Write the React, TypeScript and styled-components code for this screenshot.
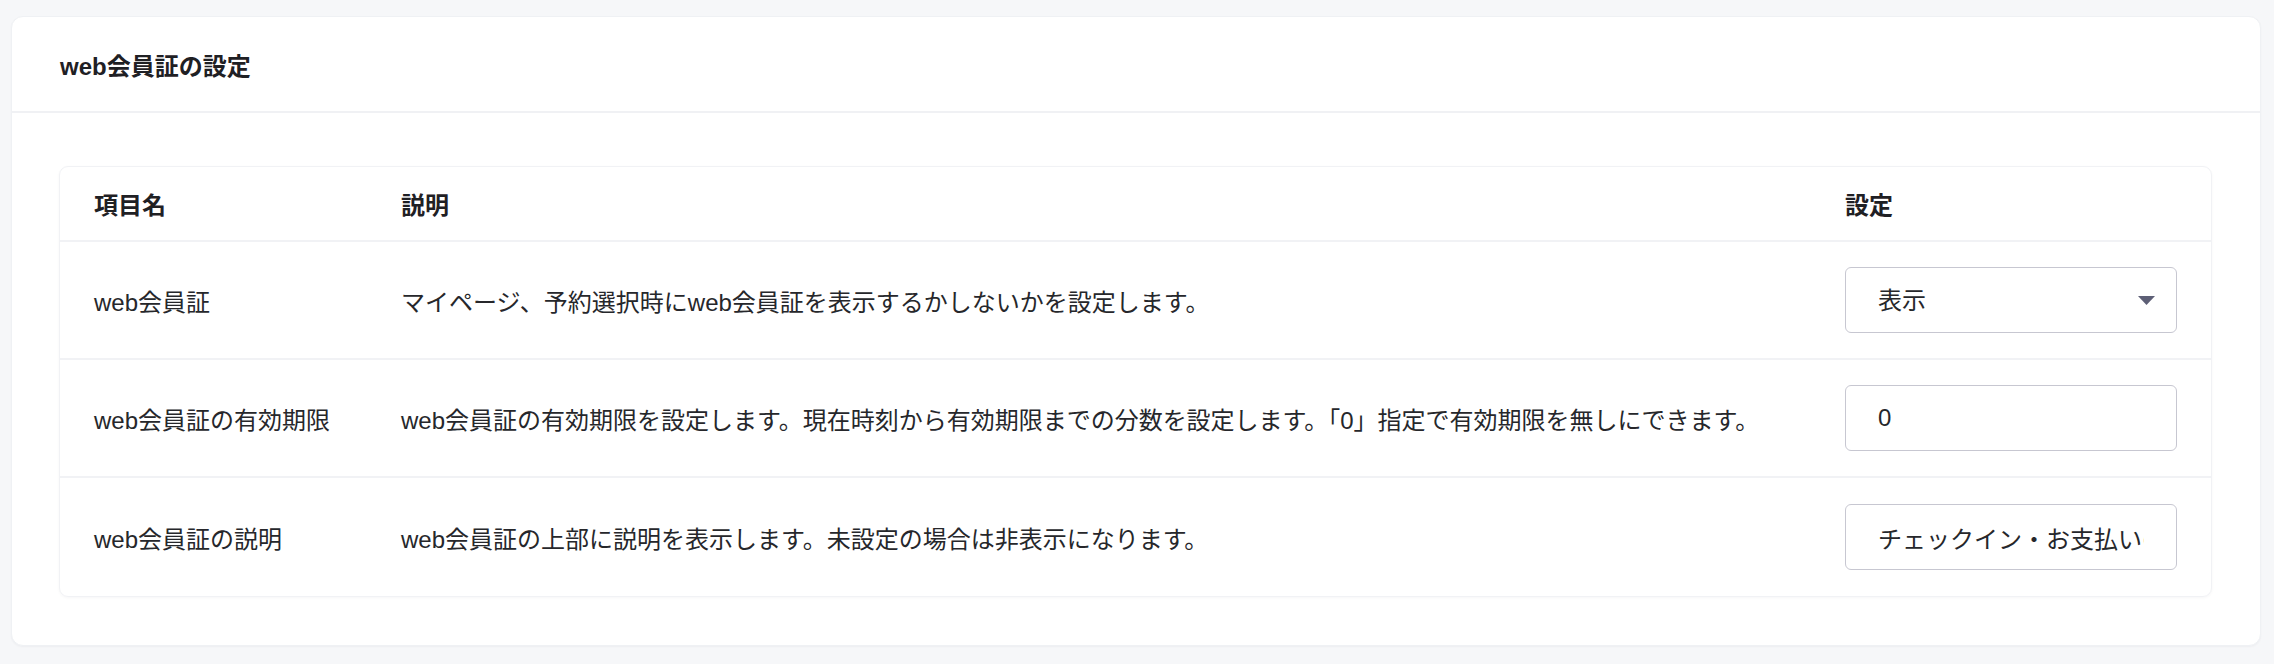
import React from "react";
import styled, { createGlobalStyle } from "styled-components";

const GlobalStyle = createGlobalStyle`
  html, body {
    margin: 0;
    padding: 0;
    background: #f6f7f9;
  }
  body {
    font-family: "Liberation Sans", "Noto Sans CJK JP", sans-serif;
    color: #222326;
  }
  * { box-sizing: border-box; }
`;

const Page = styled.div`
  padding: 16px 13px 20px 11px;
`;

const Card = styled.section`
  background: #ffffff;
  border-radius: 12px;
  box-shadow: 0 1px 2px rgba(20, 30, 50, 0.04);
  border: 1px solid #eff1f4;
`;

const CardHeader = styled.header`
  height: 96px;
  display: flex;
  align-items: center;
  padding-left: 48px;
  border-bottom: 2px solid #f0f1f4;
`;

const Title = styled.h2`
  margin: 0;
  font-size: 24px;
  font-weight: 700;
  color: #1f2024;
  letter-spacing: 0;
`;

const CardBody = styled.div`
  padding: 53px 48px 48px 47px;
`;

const Table = styled.div`
  border: 1px solid #f1f2f5;
  border-radius: 9px;
  box-shadow: 0 1px 3px rgba(20, 30, 50, 0.04);
  overflow: hidden;
`;

const Row = styled.div<{ $head?: boolean; $last?: boolean }>`
  display: grid;
  grid-template-columns: 307px 1fr 400px;
  align-items: center;
  height: ${(p) => (p.$head ? "75px" : "118px")};
  border-bottom: ${(p) => (p.$last ? "none" : "2px solid #f1f2f5")};
`;

const Cell = styled.div<{ $head?: boolean }>`
  padding: 0 34px;
  font-size: 24px;
  font-weight: ${(p) => (p.$head ? 700 : 400)};
  color: ${(p) => (p.$head ? "#1f2024" : "#26272b")};
  white-space: nowrap;
`;

const SelectWrap = styled.div`
  position: relative;
  width: 332px;
  height: 66px;
`;

const Select = styled.select`
  appearance: none;
  -webkit-appearance: none;
  width: 100%;
  height: 100%;
  border: 1.5px solid #c7c7d1;
  border-radius: 6px;
  background: #ffffff;
  padding: 0 60px 0 32px;
  font-family: "Liberation Sans", "Noto Sans CJK JP", sans-serif;
  font-size: 24px;
  color: #26272b;
  outline: none;
`;

const Arrow = styled.svg`
  position: absolute;
  right: 22px;
  top: 29px;
  width: 17px;
  height: 9px;
  pointer-events: none;
`;

const TextInput = styled.input`
  width: 332px;
  height: 66px;
  border: 1.5px solid #c7c7d1;
  border-radius: 6px;
  background: #ffffff;
  padding: 0 32px;
  font-family: "Liberation Sans", "Noto Sans CJK JP", sans-serif;
  font-size: 24px;
  color: #26272b;
  outline: none;
`;

type Item = {
  name: string;
  desc: string;
  control: React.ReactNode;
};

const items: Item[] = [
  {
    name: "web会員証",
    desc: "マイページ、予約選択時にweb会員証を表示するかしないかを設定します。",
    control: (
      <SelectWrap>
        <Select defaultValue="show">
          <option value="show">表示</option>
          <option value="hide">非表示</option>
        </Select>
        <Arrow viewBox="0 0 17 9">
          <path d="M0 0 H17 L8.5 9 Z" fill="#5d5f76" />
        </Arrow>
      </SelectWrap>
    ),
  },
  {
    name: "web会員証の有効期限",
    desc: "web会員証の有効期限を設定します。現在時刻から有効期限までの分数を設定します。「0」指定で有効期限を無しにできます。",
    control: <TextInput type="text" defaultValue="0" />,
  },
  {
    name: "web会員証の説明",
    desc: "web会員証の上部に説明を表示します。未設定の場合は非表示になります。",
    control: (
      <TextInput
        type="text"
        defaultValue="チェックイン・お支払いの際にこちらの画面をご提示ください"
      />
    ),
  },
];

export default function App() {
  return (
    <>
      <GlobalStyle />
      <Page>
        <Card>
          <CardHeader>
            <Title>web会員証の設定</Title>
          </CardHeader>
          <CardBody>
            <Table>
              <Row $head>
                <Cell $head>項目名</Cell>
                <Cell $head>説明</Cell>
                <Cell $head>設定</Cell>
              </Row>
              {items.map((it, i) => (
                <Row key={it.name} $last={i === items.length - 1}>
                  <Cell>{it.name}</Cell>
                  <Cell>{it.desc}</Cell>
                  <Cell>{it.control}</Cell>
                </Row>
              ))}
            </Table>
          </CardBody>
        </Card>
      </Page>
    </>
  );
}
